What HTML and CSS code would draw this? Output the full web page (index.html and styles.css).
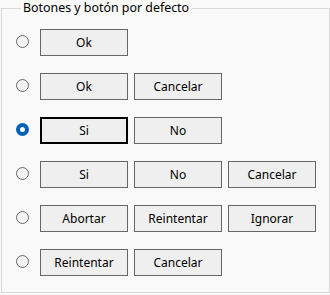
FILE: index.html
```html
<!DOCTYPE html>
<html lang="es">
<head>
<meta charset="utf-8">
<title>Botones y botón por defecto</title>
<link rel="stylesheet" href="styles.css">
</head>
<body>
<fieldset class="group">
  <legend class="caption">Botones y botón por defecto</legend>
  <div class="rows">
    <div class="row">
      <span class="radio"></span>
      <button class="btn">Ok</button>
    </div>
    <div class="row">
      <span class="radio"></span>
      <button class="btn">Ok</button>
      <button class="btn">Cancelar</button>
    </div>
    <div class="row">
      <span class="radio checked"></span>
      <button class="btn default">Si</button>
      <button class="btn">No</button>
    </div>
    <div class="row">
      <span class="radio"></span>
      <button class="btn">Si</button>
      <button class="btn">No</button>
      <button class="btn">Cancelar</button>
    </div>
    <div class="row">
      <span class="radio"></span>
      <button class="btn">Abortar</button>
      <button class="btn">Reintentar</button>
      <button class="btn">Ignorar</button>
    </div>
    <div class="row">
      <span class="radio"></span>
      <button class="btn">Reintentar</button>
      <button class="btn">Cancelar</button>
    </div>
  </div>
</fieldset>
</body>
</html>
```
FILE: styles.css
```css
html, body {
  margin: 0;
  padding: 0;
  background: #f9f9f9;
}
body {
  width: 330px;
  height: 295px;
  overflow: hidden;
  font-family: "Noto Sans", "Open Sans", sans-serif;
  font-size: 12px;
  color: #000;
}
.group {
  box-sizing: border-box;
  margin: 0 0 0 1px;
  width: 329px;
  height: 293px;
  border: 1px solid #d8d8d8;
  padding: 13px 0 0 14px;
}
.caption {
  margin-left: 5px;
  padding: 0 2px;
  line-height: 16px;
  font-size: 12.4px;
}
.rows {
  display: flex;
  flex-direction: column;
  gap: 17px;
}
.row {
  display: flex;
  align-items: center;
  height: 27px;
}
.radio {
  box-sizing: border-box;
  width: 13px;
  height: 13px;
  border-radius: 50%;
  border: 1px solid #6a6a6a;
  background: #f3f3f3;
  margin-right: 11px;
  margin-top: -2px;
  flex: none;
}
.radio.checked {
  border: 4px solid #005fb8;
  background: #fff;
}
.btn {
  box-sizing: border-box;
  width: 88px;
  height: 27px;
  margin: 0 6px 0 0;
  padding: 0;
  border: 1px solid #666;
  border-radius: 0;
  background: #efefef;
  font-family: inherit;
  font-size: 12px;
  color: #000;
  flex: none;
}
.btn.default {
  border: 2px solid #000;
}
```
